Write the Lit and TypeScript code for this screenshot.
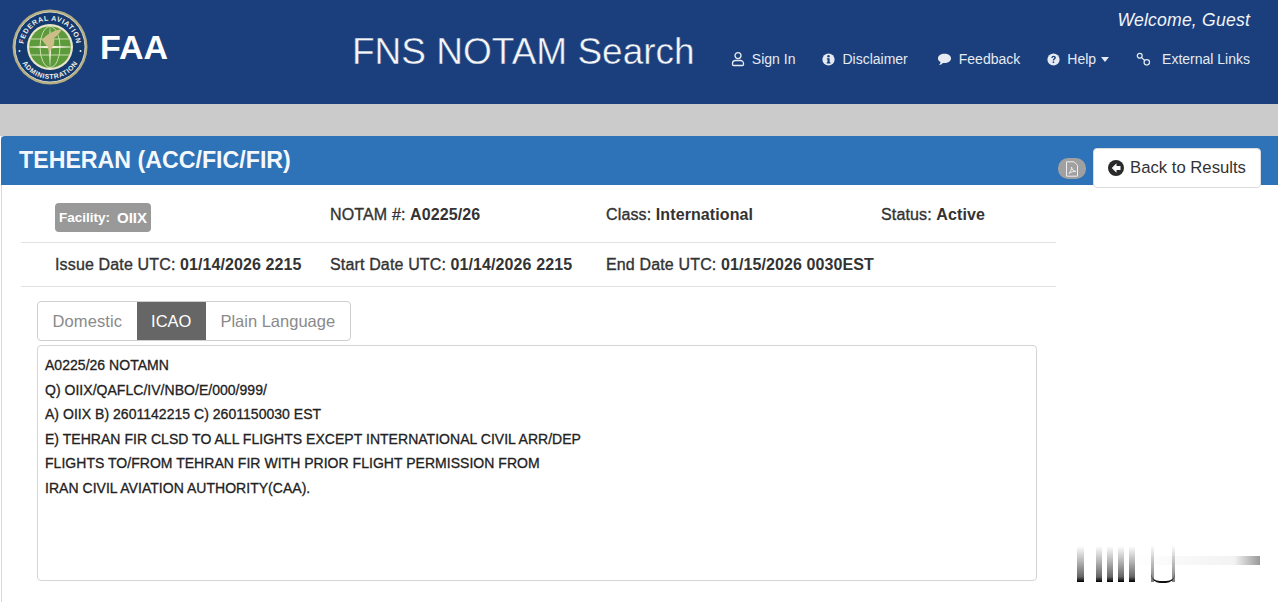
import { LitElement, html, css, svg } from "lit";
import { customElement } from "lit/decorators.js";

const seal = svg`<svg class="seal" viewBox="0 0 76 76" width="76" height="76" aria-hidden="true">
  <defs>
    <path id="arcTop" d="M11.500 38 A26.500 26.500 0 0 1 64.500 38"/>
    <path id="arcBot" d="M6 38 A32 32 0 0 0 70 38"/>
  </defs>
  <circle cx="38" cy="38" r="37.500" fill="#b5ad82"/>
  <circle cx="38" cy="38" r="35" fill="#153a70" stroke="#e6e4d4" stroke-width=".8"/>
  <text font-family="Liberation Sans" font-size="7" font-weight="700" fill="#f0f0e8" letter-spacing=".6"><textPath href="#arcTop" startOffset="50%" text-anchor="middle">FEDERAL AVIATION</textPath></text>
  <text font-family="Liberation Sans" font-size="6.800" font-weight="700" fill="#f0f0e8" letter-spacing=".6"><textPath href="#arcBot" startOffset="50%" text-anchor="middle">ADMINISTRATION</textPath></text>
  <circle cx="7.500" cy="42" r="1" fill="#ecece4"/><circle cx="68.500" cy="42" r="1" fill="#ecece4"/>
  <circle cx="38" cy="38" r="23" fill="#e9e6c8"/>
  <circle cx="38" cy="38" r="20.800" fill="#5c9a3c"/>
  <g fill="none" stroke="#d5e4b4" stroke-width=".9">
    <ellipse cx="38" cy="38" rx="10" ry="20.500"/>
    <path d="M19 30h38M17.500 38h41M19 46h38"/>
  </g>
  <path d="M38 16 39.200 36.800 61 38 39.200 39.200 38 60 36.800 39.200 15 38 36.800 36.800Z" fill="#f2f0d9"/>
  <path d="M30 31c4-5 10-9 20-11-2 4-5 7-8 9 1 4 0 8-3 11l-2 6-1-8c-2-2-4-4-6-7Z" fill="#cdbd86"/>
</svg>`;

const user = svg`<svg class="ni" viewBox="0 0 14 16" width="14" height="16"><circle cx="7" cy="4.600" r="3" fill="none" stroke="currentColor" stroke-width="1.300"/><path d="M2.500 14.500h9a1 1 0 0 0 1-1v-1a3 3 0 0 0-3-3h-5a3 3 0 0 0-3 3v1a1 1 0 0 0 1 1Z" fill="none" stroke="currentColor" stroke-width="1.300"/></svg>`;
const info = svg`<svg class="ni" viewBox="0 0 16 16" width="13" height="13"><circle cx="8" cy="8" r="7.500" fill="currentColor"/><circle cx="8" cy="4" r="1.500" fill="#1a3f7c"/><path d="M6 6.500h3.400v5h1v1.400H5.800v-1.400h1v-3.600h-.8Z" fill="#1a3f7c"/></svg>`;
const chat = svg`<svg class="ni" viewBox="0 0 16 16" width="15" height="14"><path d="M8 2c4.200 0 7.500 2.300 7.500 5.300S12.200 12.600 8 12.600c-.6 0-1.100 0-1.700-.1C5 14 3.500 14.600 1.800 14.800c1-1 1.600-2.100 1.700-3.300C1.700 10.500.5 9 .5 7.300.5 4.300 3.800 2 8 2Z" fill="currentColor"/></svg>`;
const help = svg`<svg class="ni" viewBox="0 0 16 16" width="13" height="13"><circle cx="8" cy="8" r="7.500" fill="currentColor"/><path d="M5.300 6c.2-1.600 1.300-2.500 2.900-2.500 1.600 0 2.700 1 2.700 2.300 0 1.900-2.200 1.900-2.200 3.500H7c0-2.400 2-2.300 2-3.500 0-.5-.4-.9-1-.9-.7 0-1 .5-1.100 1.100Z" fill="#1a3f7c"/><rect x="7" y="10.400" width="1.800" height="1.900" fill="#1a3f7c"/></svg>`;
const link = svg`<svg class="ni" viewBox="0 0 16 16" width="15" height="15" fill="none" stroke="currentColor" stroke-width="1.300"><circle cx="4" cy="4" r="2.600"/><circle cx="11.500" cy="11" r="2.900"/><path d="M6 6 9.400 9"/></svg>`;
const pdf = svg`<svg viewBox="0 0 14 16" width="14" height="16" fill="none" stroke="#eeeeee" stroke-width="1"><path d="M1.500.8h7.500l3.500 3.500v10.900h-11Z"/><path d="M4 12.500c2-2 2.500-4.500 2.500-6.500.5 2.500 2 4 4.500 4.500-2.500-.2-5 .5-7 2Z"/></svg>`;
const back = svg`<svg viewBox="0 0 16 16" width="16" height="16"><circle cx="8" cy="8" r="8" fill="#2a2a2a"/><path d="M8.500 3.300 3.800 8l4.700 4.700V9.900h4V6.100h-4Z" fill="#fff"/></svg>`;

const body = [
  "A0225/26 NOTAMN",
  "Q) OIIX/QAFLC/IV/NBO/E/000/999/",
  "A) OIIX B) 2601142215 C) 2601150030 EST",
  "E) TEHRAN FIR CLSD TO ALL FLIGHTS EXCEPT INTERNATIONAL CIVIL ARR/DEP",
  "FLIGHTS TO/FROM TEHRAN FIR WITH PRIOR FLIGHT PERMISSION FROM",
  "IRAN CIVIL AVIATION AUTHORITY(CAA).",
];

@customElement("app-root")
export class AppRoot extends LitElement {
  static styles = css`
    :host { display: block; width: 1278px; height: 602px; overflow: hidden; background: #fff; position: relative;
      font-family: "Liberation Sans", Arial, sans-serif; color: #333; }
    .hdr { height: 104px; background: #1a3f7c; color: #fff; display: flex; box-sizing: border-box; padding: 9px 28px 0 12px; }
    .seal { display: block; flex: none; }
    .faa { font-size: 34px; font-weight: 700; line-height: 40px; margin: 18px 0 0 12px; width: 252px; flex: none; }
    .title { font-size: 37px; line-height: 44px; margin-top: 21px; flex: none; white-space: nowrap; color: #f4f6fa; -webkit-text-stroke: .45px #1a3f7c; }
    .right { flex: 1; display: flex; flex-direction: column; align-items: flex-end; }
    .welcome { font-size: 17.600px; font-style: italic; line-height: 22px; color: #f2f4f8; letter-spacing: .2px; }
    .nav { display: flex; align-items: center; margin-top: 18px; font-size: 14px; line-height: 20px; color: #e6eaf2; }
    .nav span { display: flex; align-items: center; white-space: nowrap; margin-right: 27px; gap: 7px; }
    .nav span:nth-child(2) { margin-right: 29px; }
    .nav .ni { flex: none; }
    .nav .n5 { gap: 11px; margin-right: 0; }
    .caret { width: 0; height: 0; border: 4.500px solid transparent; border-top: 5px solid #e6eaf2; border-bottom: 0; margin-left: -2px; }
    .band { height: 32px; background: #cbcbcb; }
    .panel { margin-left: 1px; border-left: 1px solid #d8d8d8; height: 466px; position: relative; }
    .head { height: 49px; background: #2e72b8; border-radius: 4px 0 0 0; display: flex; align-items: flex-start; box-sizing: border-box; padding: 0 17px 0 18px; margin-left: -1px; }
    .head h1 { margin: 8px 0 0; font-size: 23.200px; font-weight: 700; line-height: 32px; color: #f4f8fc; flex: 1; white-space: nowrap; }
    .pdf { width: 28px; height: 21px; border-radius: 10px; background: #a0a0a0; display: flex; align-items: center; justify-content: center; margin: 22px 7px 0 0; }
    .back { margin-top: 12px; width: 168px; height: 40px; box-sizing: border-box; background: #fff; border: 1px solid #dcdcdc; border-radius: 4px; display: flex; align-items: center; justify-content: center; gap: 6px; font-size: 16.700px; color: #333; }
    .rows { width: 1035px; margin-left: 19px; }
    .row { display: grid; grid-template-columns: 275px 276px 275px 1fr; padding-left: 34px; align-items: center; font-size: 16px; box-sizing: border-box; white-space: nowrap; }
    .r1 { height: 58px; border-bottom: 1px solid #e2e2e2; padding-top: 2px; }
    .r2 { height: 44px; border-bottom: 1px solid #e2e2e2; }
    .row b { font-weight: 700; letter-spacing: .1px; }
    .row .lab { font-weight: 400; letter-spacing: .15px; -webkit-text-stroke: .35px #333; }
    .badge { justify-self: start; background: #999999; color: #fff; height: 29px; padding: 0 4px; display: flex; align-items: center; gap: 7px; border-radius: 4px; margin-top: 6px; }
    .row .badge b { font-size: 13.500px; letter-spacing: 0; }
    .row .badge b:last-child { font-size: 15px; }
    .tabs { display: flex; margin: 14px 0 0 35px; height: 40px; width: max-content; border: 1px solid #cfcfcf; border-radius: 4px; box-sizing: border-box; font-size: 16.500px; color: #8a8a8a; }
    .tabs div { display: flex; align-items: center; padding: 0 14.500px; }
    .tabs div:first-child { letter-spacing: .1px; }
    .tabs .on { background: #666666; color: #fff; }
    .note { margin: 4px 0 0 35px; width: 1000px; height: 236px; box-sizing: border-box; border: 1px solid #d4d4d4; border-radius: 4px; padding: 7px 7px; font-size: 14px; letter-spacing: .03px; line-height: 24.600px; color: #222; -webkit-text-stroke: .3px #222; }
    .note div { white-space: nowrap; }
    .wm { position: absolute; right: 18px; bottom: 20px; width: 183px; height: 38px; display: flex; align-items: flex-end; filter: blur(.5px); }
    .bar { width: 6.500px; height: 36px; background: linear-gradient(#0000 0, #0004 40%, #0009 85%, #000 100%); margin-right: 4.500px; flex: none; }
    .bar.first { margin-right: 12px; }
    .bar.last { margin-right: 16px; }
    .u { width: 24px; height: 36px; border: 0 solid; border-image: linear-gradient(#0000, #0008) 1; border-width: 0 3px; box-sizing: border-box; position: relative; flex: none; }
    .u::after { content: ""; position: absolute; left: -3px; right: -3px; bottom: -1px; height: 7px; border-bottom: 2px solid #111; border-radius: 0 0 14px 14px; }
    .fade { position: absolute; left: 55px; right: 0; top: 12px; height: 9px; background: linear-gradient(90deg, #0000 0, #00000008 50%, #0000000c 80%, #0006 100%); }
  `;

  render() {
    return html`
      <div class="hdr">
        ${seal}
        <div class="faa">FAA</div>
        <div class="title">FNS NOTAM Search</div>
        <div class="right">
          <div class="welcome">Welcome, Guest</div>
          <div class="nav">
            <span>${user}Sign In</span>
            <span>${info}Disclaimer</span>
            <span>${chat}Feedback</span>
            <span>${help}Help<i class="caret"></i></span>
            <span class="n5">${link}External Links</span>
          </div>
        </div>
      </div>
      <div class="band"></div>
      <div class="panel">
        <div class="head">
          <h1>TEHERAN (ACC/FIC/FIR)</h1>
          <div class="pdf">${pdf}</div>
          <div class="back">${back}<span>Back to Results</span></div>
        </div>
        <div class="rows">
          <div class="row r1">
            <div class="badge"><b>Facility:</b><b>OIIX</b></div>
            <div><span class="lab">NOTAM #:</span> <b>A0225/26</b></div>
            <div><span class="lab">Class:</span> <b>International</b></div>
            <div><span class="lab">Status:</span> <b>Active</b></div>
          </div>
          <div class="row r2">
            <div><span class="lab">Issue Date UTC:</span> <b>01/14/2026 2215</b></div>
            <div><span class="lab">Start Date UTC:</span> <b>01/14/2026 2215</b></div>
            <div><span class="lab">End Date UTC:</span> <b>01/15/2026 0030EST</b></div>
          </div>
        </div>
        <div class="tabs">
          <div>Domestic</div>
          <div class="on">ICAO</div>
          <div>Plain Language</div>
        </div>
        <div class="note">${body.map((l) => html`<div>${l}</div>`)}</div>
        <div class="wm">
          <i class="fade"></i>
          <i class="bar first"></i><i class="bar"></i><i class="bar"></i><i class="bar"></i><i class="bar last"></i>
          <i class="u"></i>
        </div>
      </div>
    `;
  }
}
